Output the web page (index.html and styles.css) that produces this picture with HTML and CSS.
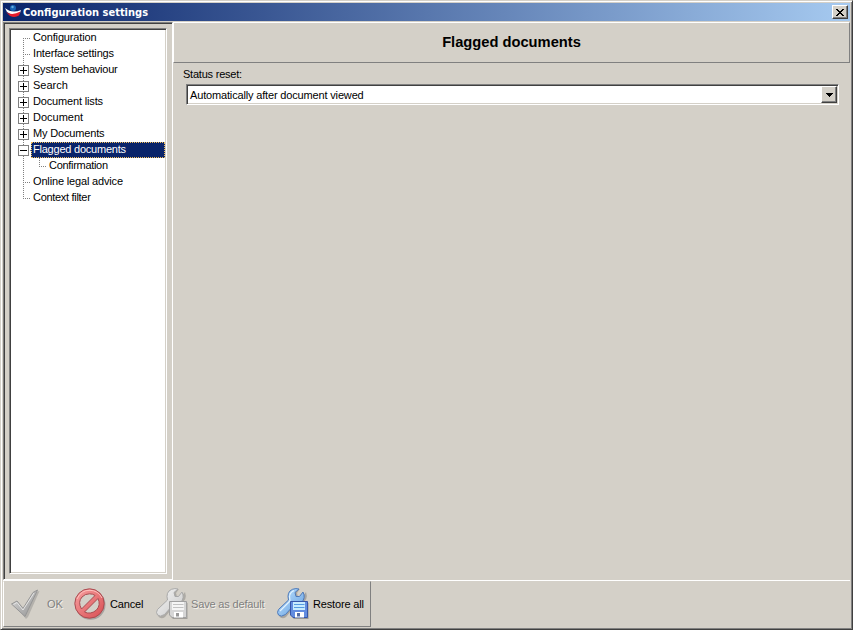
FILE: index.html
```html
<!DOCTYPE html>
<html lang="en">
<head>
<meta charset="utf-8">
<title>Configuration settings</title>
<link rel="stylesheet" href="styles.css">
</head>
<body>
<div class="window">
  <header class="titlebar">
    <svg class="logo" width="16" height="16" viewBox="0 0 16 16"><path d="M0 4Q7 10 16 6L15 9Q8 13 2 8Z" fill="#fff"/><path d="M1 8Q7 12 15.500 7.500L14 11.500Q10 14 5 12Z" fill="#e51b2c"/><circle cx="8" cy="4" r="3" fill="#1763b5"/><circle cx="7.500" cy="3" r="1.200" fill="#66acdf"/></svg>
    <h1>Configuration settings</h1>
    <button class="close" aria-label="Close"><svg width="8" height="7" viewBox="0 0 8 7" shape-rendering="crispEdges"><path d="M0 0h2v1H0zM6 0h2v1H6zM1 1h2v1H1zM5 1h2v1H5zM2 2h4v1H2zM3 3h2v1H3zM2 4h4v1H2zM1 5h2v1H1zM5 5h2v1H5zM0 6h2v1H0zM6 6h2v1H6z"/></svg></button>
  </header>
  <main class="content">
    <nav class="side">
      <ul class="tree">
        <li class="first snug"><i class="line"></i><span>Configuration</span></li>
        <li class="snug"><i class="line"></i><span>Interface settings</span></li>
        <li class="tight"><i class="line box plus"></i><span>System behaviour</span></li>
        <li><i class="line box plus"></i><span>Search</span></li>
        <li class="snug"><i class="line box plus"></i><span>Document lists</span></li>
        <li><i class="line box plus"></i><span>Document</span></li>
        <li class="snug"><i class="line box plus"></i><span>My Documents</span></li>
        <li class="selected tight"><i class="line box"></i><span>Flagged documents</span></li>
        <li class="child tighter"><i class="line through"></i><i class="line end"></i><span>Confirmation</span></li>
        <li class="snug"><i class="line"></i><span>Online legal advice</span></li>
        <li class="tighter"><i class="line end"></i><span>Context filter</span></li>
      </ul>
    </nav>
    <section class="page">
      <h2><span>Flagged documents</span></h2>
      <div class="form">
        <label class="tight">Status reset:</label>
        <div class="select snug"><span>Automatically after document viewed</span><button aria-label="Open list"><svg width="7" height="4" viewBox="0 0 7 4" shape-rendering="crispEdges"><path d="M0 0h7v1H0zM1 1h5v1H1zM2 2h3v1H2zM3 3h1v1H3z"/></svg></button></div>
      </div>
    </section>
  </main>
  <footer class="footer">
    <div class="tools snug">
      <div class="tool ok disabled">
        <svg width="32" height="32" viewBox="0 0 32 32"><defs><linearGradient id="ck" x2="1" y2="1"><stop stop-color="#ddd"/><stop offset="1" stop-color="#909090"/></linearGradient></defs><path d="M5 16L9 14L16 22L27 4L30.500 3L19 29L17 31Z" fill="#777" opacity=".35"/><path d="M2.500 16L8 13L14 20.500L24 4.500L28.500 2L16 28.500Z" fill="url(#ck)" stroke="#969696"/><path d="M4.500 16.500L8 14.500L14 22L25 5" fill="none" stroke="#e5e5e5"/></svg>
        <span>OK</span>
      </div>
      <div class="tool cancel">
        <svg width="32" height="32" viewBox="0 0 32 32"><defs><linearGradient id="rd" x2="1" y2="1"><stop stop-color="#f8a2a2"/><stop offset="1" stop-color="#d84c50"/></linearGradient></defs><circle cx="16.500" cy="16.800" r="13.500" fill="none" stroke="#777" stroke-width="3" opacity=".5"/><path d="M15.500 .8A14.700 14.700 0 1 0 15.500 30.200A14.700 14.700 0 1 0 15.500 .8ZM15.500 5.800Q19 5.800 21 7.500L7.500 21Q3.500 14 8 9Q11 5.800 15.500 5.800ZM24 10.500Q27 17 22.500 22Q16.500 27 10.500 24Z" fill="url(#rd)" fill-rule="evenodd" stroke="#a94b50"/><path d="M3 11Q7 2 16 2.300Q24 2.500 28 10" fill="none" stroke="#ffc0bc"/></svg>
        <span>Cancel</span>
      </div>
      <div class="tool save disabled">
        <svg width="32" height="32" viewBox="0 0 32 32"><defs><linearGradient id="gr" x2="1" y2="1"><stop stop-color="#f6f6f6"/><stop offset="1" stop-color="#c8c8c8"/></linearGradient></defs>
          <path d="M2 24L14 13Q12 4 19 2L23 1L20 5L21 9L25 9L29 4Q32 12 24 16L19 17L9 29Q5 32 2 28Z" fill="#555" opacity=".3"/><path d="M1.500 21.500L11.500 12Q9.500 4 15.500 1.300Q19 0 22 1L18 4.500L19 8.500L22.500 8.500L26 4Q29 10 24.500 14.500Q21 17.500 17.500 16.500L8.500 26.500Q4 29.500 1.500 27Q-.5 24.500 1.500 21.500Z" fill="url(#gr)" stroke="#a9a9a9"/>
          <path d="M15 15H31.500V31H17L15 29Z" fill="#444" opacity=".35"/><path d="M13.500 13.500H30.500V29.500H16L13.500 27Z" fill="#d6d6d6" stroke="#a0a0a0"/><path d="M16 14H28V22H16Z" fill="#f5f5f5"/><path d="M17 16.500H27.500M17 19.500H27.500" stroke="#c2c2c2"/><path d="M18 24H27V29.500H18Z" fill="#fff"/><path d="M20 25H23V28.500H20Z" fill="#999"/></svg>
        <span>Save as default</span>
      </div>
      <div class="tool restore">
        <svg width="32" height="32" viewBox="0 0 32 32"><defs><linearGradient id="bl" x2="1" y2="1"><stop stop-color="#c4e6ff"/><stop offset="1" stop-color="#609ce0"/></linearGradient></defs>
          <path d="M2 24L14 13Q12 4 19 2L23 1L20 5L21 9L25 9L29 4Q32 12 24 16L19 17L9 29Q5 32 2 28Z" fill="#555" opacity=".35"/><path d="M1.500 21.500L11.500 12Q9.500 4 15.500 1.300Q19 0 22 1L18 4.500L19 8.500L22.500 8.500L26 4Q29 10 24.500 14.500Q21 17.500 17.500 16.500L8.500 26.500Q4 29.500 1.500 27Q-.5 24.500 1.500 21.500Z" fill="url(#bl)" stroke="#4e79b8"/><path d="M3 23L13 13Q11 5 17 2.500" fill="none" stroke="#e2f3ff" stroke-width="1.200"/>
          <path d="M15 15H31.500V31H17L15 29Z" fill="#444" opacity=".4"/><path d="M13.500 13.500H30.500V29.500H16L13.500 27Z" fill="#628cdf" stroke="#3656a8"/><path d="M16 14H28V22H16Z" fill="#c8ecff"/><path d="M17 16.500H27.500M17 19.500H27.500" stroke="#559be0"/><path d="M18 24H27V29.500H18Z" fill="#fff"/><path d="M20 25H23V28.500H20Z" fill="#536ba5"/></svg>
        <span>Restore all</span>
      </div>
    </div>
  </footer>
</div>
</body>
</html>
```
FILE: styles.css
```css
* { box-sizing: border-box; }
body { margin: 0; background: #d4d0c8; font: 11px/16px "Liberation Sans", Arial, sans-serif; color: #000; overflow: hidden; }
h1, h2, ul { margin: 0; padding: 0; font-size: inherit; list-style: none; }
button { padding: 0; background: #d4d0c8; display: flex; align-items: center; justify-content: center; border: 1px solid; border-color: #fff #404040 #404040 #fff; box-shadow: inset -1px -1px #808080; }
span { white-space: nowrap; }
.snug { letter-spacing: -.16px; }
.tight { letter-spacing: -.22px; }
.tighter { letter-spacing: -.3px; }
.window { width: 853px; height: 630px; display: flex; flex-direction: column; border: 1px solid; border-color: #d4d0c8 #404040 #404040 #d4d0c8; box-shadow: inset 1px 1px #fff, inset -1px -1px #808080; padding: 2px 2px 1px 2px; }
.titlebar { height: 18px; flex: none; display: flex; align-items: center; padding: 0 2px; background: linear-gradient(90deg, #0a246a, #a6caf0); color: #fff; }
.titlebar h1 { font: bold 11px/18px "DejaVu Sans Condensed", "DejaVu Sans", sans-serif; margin-left: 2px; padding-top: 1px; white-space: nowrap; }
.close { width: 16px; height: 14px; margin-left: auto; }
.content { height: 559px; flex: none; display: flex; padding-top: 1px; }
.side { width: 170px; padding: 5px; border: 1px solid; border-color: #808080 #fff #fff #808080; box-shadow: inset 1px 1px #404040; }
.tree { width: 158px; height: 546px; background: #fff; border: 1px solid; border-color: #808080 #fff #fff #808080; box-shadow: inset 1px 1px #404040, inset -1px -1px #d4d0c8; padding: 1px 1px 0 8px; }
.tree li { height: 16px; display: flex; line-height: 14px; }
.line { width: 13px; height: 16px; flex: none; background: repeating-linear-gradient(180deg, #808080 0 1px, transparent 1px 2px) 5px 0 / 1px 16px no-repeat, repeating-linear-gradient(90deg, #808080 0 1px, transparent 1px 2px) 5px 8px / 7px 1px no-repeat; }
.first .line { background-position: 5px 8px, 5px 8px; }
.line.end { background-size: 1px 9px, 7px 1px; }
.line.through { background-size: 1px 16px, 0 0; width: 16px; }
.line.box { background: linear-gradient(#000, #000) 2px 8px / 7px 1px no-repeat, repeating-linear-gradient(180deg, #808080 0 1px, transparent 1px 2px) 5px 0 / 1px 3px no-repeat, repeating-linear-gradient(180deg, #808080 0 1px, transparent 1px 2px) 5px 14px / 1px 2px no-repeat, linear-gradient(#808080, #808080) 0 3px / 11px 1px no-repeat, linear-gradient(#808080, #808080) 0 13px / 11px 1px no-repeat, linear-gradient(#808080, #808080) 0 3px / 1px 11px no-repeat, linear-gradient(#808080, #808080) 10px 3px / 1px 11px no-repeat, linear-gradient(#808080, #808080) 12px 8px / 1px 1px no-repeat; }
.line.plus { background-image: linear-gradient(#000, #000), repeating-linear-gradient(180deg, #808080 0 1px, transparent 1px 2px), repeating-linear-gradient(180deg, #808080 0 1px, transparent 1px 2px), linear-gradient(#808080, #808080), linear-gradient(#808080, #808080), linear-gradient(#808080, #808080), linear-gradient(#808080, #808080), linear-gradient(#000, #000); background-position: 2px 8px, 5px 0, 5px 14px, 0 3px, 0 13px, 0 3px, 10px 3px, 5px 5px; background-size: 7px 1px, 1px 3px, 1px 2px, 11px 1px, 11px 1px, 1px 11px, 1px 11px, 1px 7px; }
.tree span { padding-left: 2px; }
.selected span { flex: 1; background: #0a246a; color: #fff; outline: 1px dotted #f0bd5a; outline-offset: -1px; }
.page { flex: 1; }
.page h2 { height: 41px; border: 1px solid; border-color: #fff #808080 #808080 #fff; display: flex; justify-content: center; font: bold 14.7px/39px "Liberation Sans", Arial, sans-serif; }
.form { padding: 4px 10px 0 10px; display: flex; flex-direction: column; }
.form label { height: 14px; line-height: 14px; white-space: nowrap; }
.select { width: 653px; height: 21px; margin: 3px 0 0 3px; background: #fff; border: 1px solid; border-color: #808080 #fff #fff #808080; box-shadow: inset 1px 1px #404040, inset -1px -1px #d4d0c8; display: flex; justify-content: space-between; padding: 1px 1px 1px 3px; line-height: 18px; }
.select button { width: 16px; height: 17px; }
.footer { height: 47px; flex: none; border-top: 1px solid #fff; }
.tools { width: 368px; height: 46px; border: 1px solid; border-color: #d4d0c8 #808080 #808080 #fff; display: flex; align-items: center; padding-bottom: 1px; }
.tool { display: flex; align-items: center; }
.tool svg { flex: none; }
.ok { width: 70px; padding-left: 5px; }
.cancel { width: 82px; }
.save { width: 121px; }
.ok span { margin-left: 6px; }
.cancel span { margin-left: 4px; }
.save span { margin-left: 3px; }
.restore span { margin-left: 4px; }
.disabled { color: #808080; text-shadow: 1px 1px #f4f1eb; }
```
